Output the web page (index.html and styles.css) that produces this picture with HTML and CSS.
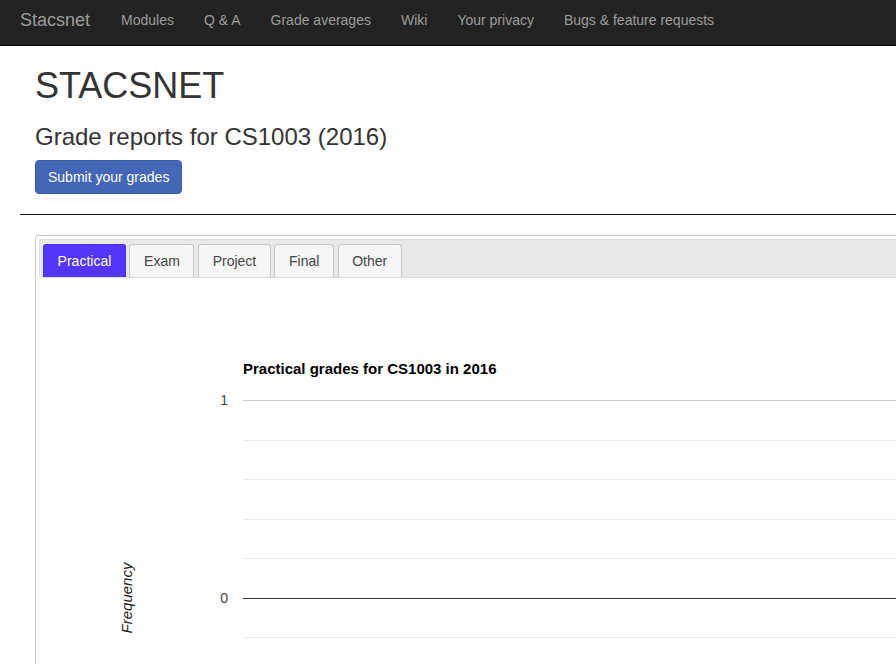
FILE: index.html
```html
<!DOCTYPE html>
<html lang="en">
<head>
<meta charset="utf-8">
<title>Stacsnet - Grade reports</title>
<link rel="stylesheet" href="styles.css">
</head>
<body>
<nav class="navbar">
  <a class="brand" href="#">Stacsnet</a>
  <a class="nav-link" href="#">Modules</a>
  <a class="nav-link" href="#">Q &amp; A</a>
  <a class="nav-link" href="#">Grade averages</a>
  <a class="nav-link" href="#">Wiki</a>
  <a class="nav-link" href="#">Your privacy</a>
  <a class="nav-link" href="#">Bugs &amp; feature requests</a>
</nav>
<main class="page">
  <div class="intro">
    <h1 class="site-title">STACSNET</h1>
    <h3 class="report-title">Grade reports for CS1003 (2016)</h3>
    <button class="btn-primary" type="button">Submit your grades</button>
  </div>
  <hr class="rule">
  <div class="intro">
    <div class="tabs">
      <ul class="tab-nav">
        <li class="tab active"><a href="#">Practical</a></li>
        <li class="tab"><a href="#">Exam</a></li>
        <li class="tab"><a href="#">Project</a></li>
        <li class="tab"><a href="#">Final</a></li>
        <li class="tab"><a href="#">Other</a></li>
      </ul>
      <div class="tab-panel">
        <svg class="chart" width="900" height="420" xmlns="http://www.w3.org/2000/svg">
          <text x="204" y="96" class="chart-title">Practical grades for CS1003 in 2016</text>
          <line x1="204" y1="122.5" x2="900" y2="122.5" stroke="#cccccc" stroke-width="1"/>
          <line x1="204" y1="162.5" x2="900" y2="162.5" stroke="#ebebeb" stroke-width="1"/>
          <line x1="204" y1="201.5" x2="900" y2="201.5" stroke="#ebebeb" stroke-width="1"/>
          <line x1="204" y1="241.5" x2="900" y2="241.5" stroke="#ebebeb" stroke-width="1"/>
          <line x1="204" y1="280.5" x2="900" y2="280.5" stroke="#ebebeb" stroke-width="1"/>
          <line x1="204" y1="359.5" x2="900" y2="359.5" stroke="#ebebeb" stroke-width="1"/>
          <line x1="204" y1="320.5" x2="900" y2="320.5" stroke="#333333" stroke-width="1"/>
          <text x="189" y="127" class="axis-label" text-anchor="end">1</text>
          <text x="189" y="325" class="axis-label" text-anchor="end">0</text>
          <text class="axis-title" text-anchor="middle" transform="translate(93 320) rotate(-90)">Frequency</text>
        </svg>
      </div>
    </div>
  </div>
</main>
</body>
</html>
```

FILE: styles.css
```css
html, body {
  margin: 0;
  padding: 0;
  overflow: hidden;
  background: #ffffff;
  font-family: "Liberation Sans", Arial, Helvetica, sans-serif;
  color: #333333;
}

.navbar {
  display: flex;
  align-items: flex-start;
  height: 45px;
  background: #222222;
  border-bottom: 1px solid #080808;
}

.navbar a {
  text-decoration: none;
  color: #9d9d9d;
  padding-top: 10px;
  line-height: 20px;
}

.brand {
  font-size: 18px;
  padding-left: 20px;
  padding-right: 16px;
}

.nav-link {
  font-size: 14px;
  padding-left: 15px;
  padding-right: 15px;
}

.page {
  padding-left: 20px;
  width: calc(100% + 20px);
}

.intro {
  padding-left: 15px;
}

.site-title {
  margin: 20px 0 0;
  font-size: 36px;
  font-weight: 500;
  line-height: 39.6px;
  color: #333333;
}

.report-title {
  margin: 18px 0 10px;
  font-size: 24px;
  font-weight: 500;
  line-height: 26.4px;
  color: #333333;
}

.btn-primary {
  display: inline-block;
  font-family: "Liberation Sans", Arial, sans-serif;
  font-size: 14px;
  line-height: 20px;
  padding: 6px 12px;
  color: #ffffff;
  background: #4366b7;
  border: 1px solid #3a5ca8;
  border-radius: 4px;
  cursor: pointer;
}

.rule {
  margin: 20px 0 20px;
  border: 0;
  border-top: 1px solid #111111;
  height: 0;
}

.tabs {
  border: 1px solid #c5c5c5;
  border-radius: 3px;
  padding: 3px;
  background: #ffffff;
  height: 600px;
}

.tab-nav {
  display: flex;
  margin: 0;
  padding: 3px 3px 0;
  list-style: none;
  background: #e9e9e9;
  border: 1px solid #dddddd;
  border-radius: 3px;
}

.tab {
  margin: 1px 3.6px 0 0;
  border: 1px solid #c5c5c5;
  border-bottom: 0;
  border-radius: 3px 3px 0 0;
  background: #f6f6f6;
}

.tab a {
  display: block;
  padding: 7px 13.6px;
  font-size: 14px;
  line-height: 18px;
  color: #454545;
  text-decoration: none;
}

.tab.active {
  background: #5336fd;
  border-color: #4b2ef7;
}

.tab.active a {
  color: #ffffff;
}

.tab-panel {
  background: #ffffff;
}

.chart {
  display: block;
}

.chart-title {
  font-family: "Liberation Sans", Arial, sans-serif;
  font-size: 15px;
  font-weight: bold;
  fill: #000000;
}

.axis-label {
  font-family: "Liberation Sans", Arial, sans-serif;
  font-size: 14px;
  fill: #444444;
}

.axis-title {
  font-family: "Liberation Sans", Arial, sans-serif;
  font-size: 15px;
  font-style: italic;
  fill: #222222;
}
```
